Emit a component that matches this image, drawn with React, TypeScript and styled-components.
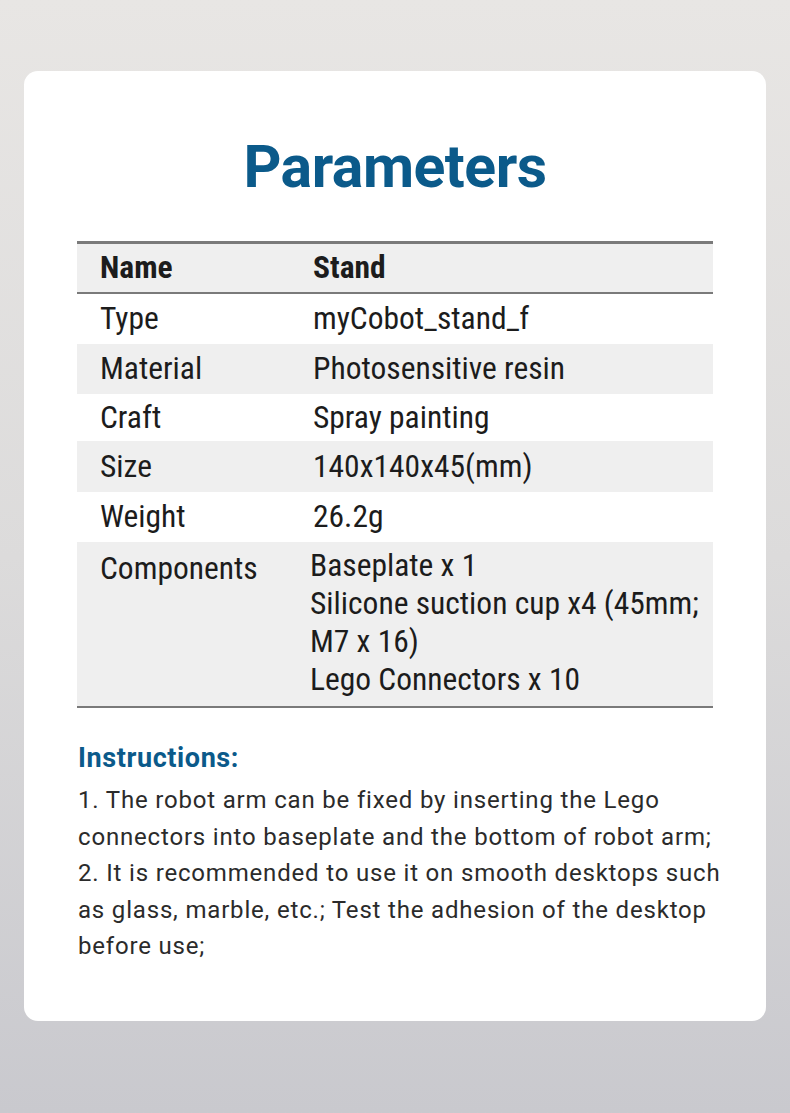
import React from 'react';
import styled, { createGlobalStyle } from 'styled-components';

const GlobalStyle = createGlobalStyle`
  html, body {
    margin: 0;
    padding: 0;
  }
  body {
    font-family: Roboto, "Noto Sans", sans-serif;
  }
`;

const Page = styled.div`
  width: 790px;
  height: 1113px;
  box-sizing: border-box;
  padding: 71px 24px 0;
  background: linear-gradient(180deg, #e8e6e4 0%, #dcdbdb 50%, #c9c9ce 100%);
`;

const Card = styled.div`
  background: #fff;
  border-radius: 14px;
  height: 950px;
  box-sizing: border-box;
  padding: 61px 53px 0;
`;

const Title = styled.h1`
  margin: 0 0 39px;
  text-align: center;
  color: #0b5a8a;
  font-family: Roboto, sans-serif;
  font-weight: 700;
  font-size: 59px;
  line-height: 70px;
  letter-spacing: -0.5px;
`;

const Table = styled.div`
  border-top: 3px solid #7a7a7a;
  border-bottom: 2px solid #7a7a7a;
`;

const Row = styled.div<{ $shade?: boolean; $head?: boolean; $h?: number; $top?: boolean }>`
  display: grid;
  grid-template-columns: 236px 1fr;
  align-items: ${(p) => (p.$top ? 'start' : 'center')};
  height: ${(p) => p.$h ?? 50}px;
  box-sizing: border-box;
  padding-top: ${(p) => (p.$top ? 5 : 0)}px;
  background: ${(p) => (p.$shade ? '#efefef' : '#fff')};
  border-bottom: ${(p) => (p.$head ? '2px solid #7a7a7a' : 'none')};
  font-family: "Roboto Condensed", Roboto, sans-serif;
  font-size: 31.5px;
  line-height: 38px;
  font-weight: ${(p) => (p.$head ? 700 : 400)};
  color: #1c1c1c;
`;

const Label = styled.div<{ $list?: boolean }>`
  padding-left: 23px;
  padding-top: ${(p) => (p.$list ? 3 : 0)}px;
`;

const Value = styled.div<{ $list?: boolean }>`
  display: flex;
  flex-direction: column;
  margin-left: ${(p) => (p.$list ? -3 : 0)}px;
`;

const Heading = styled.h2`
  margin: 33px 0 7px 1px;
  color: #0b5a8a;
  font-family: Roboto, sans-serif;
  font-weight: 700;
  font-size: 27px;
  line-height: 34px;
  letter-spacing: 0.6px;
`;

const Body = styled.p`
  margin: 0 0 0 1px;
  color: #2b2b2b;
  font-family: Roboto, sans-serif;
  font-weight: 400;
  font-size: 24px;
  line-height: 36.5px;
  letter-spacing: 0.82px;
  white-space: nowrap;
`;

const rows = [
  { name: 'Type', value: 'myCobot_stand_f' },
  { name: 'Material', value: 'Photosensitive resin' },
  { name: 'Craft', value: 'Spray painting', h: 47 },
  { name: 'Size', value: '140x140x45(mm)', h: 51 },
  { name: 'Weight', value: '26.2g' },
];

export default function App() {
  return (
    <Page>
      <GlobalStyle />
      <Card>
        <Title>Parameters</Title>
        <Table>
          <Row $head $shade>
            <Label>Name</Label>
            <Value>Stand</Value>
          </Row>
          {rows.map((r, i) => (
            <Row key={r.name} $shade={i % 2 === 1} $h={r.h}>
              <Label>{r.name}</Label>
              <Value>{r.value}</Value>
            </Row>
          ))}
          <Row $shade $top $h={164}>
            <Label $list>Components</Label>
            <Value $list>
              <span>Baseplate x 1</span>
              <span>Silicone suction cup x4 (45mm;</span>
              <span>M7 x 16)</span>
              <span>Lego Connectors x 10</span>
            </Value>
          </Row>
        </Table>
        <Heading>Instructions:</Heading>
        <Body>
          1. The robot arm can be fixed by inserting the Lego
          <br />
          connectors into baseplate and the bottom of robot arm;
          <br />
          2. It is recommended to use it on smooth desktops such
          <br />
          as glass, marble, etc.; Test the adhesion of the desktop
          <br />
          before use;
        </Body>
      </Card>
    </Page>
  );
}
